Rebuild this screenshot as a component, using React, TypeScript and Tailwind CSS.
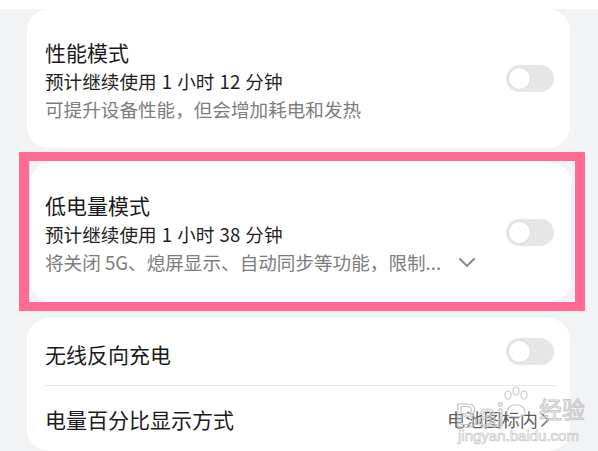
import React from "react";

const font = { fontFamily: '"Noto Sans CJK SC", "Noto Sans", sans-serif' };

function Toggle() {
  return (
    <div className="w-[48px] h-[27px] rounded-full bg-[#e6e6e6] flex items-center p-[2px] shrink-0">
      <div className="w-[23px] h-[23px] rounded-full bg-white border border-[#dadada]" />
    </div>
  );
}

function Chevron({ dir }: { dir: "down" | "right" }) {
  if (dir === "down")
    return (
      <svg width="18" height="11" viewBox="0 0 18 11" className="shrink-0">
        <path d="M2 2 L9 9 L16 2" fill="none" stroke="#8a8a8a" strokeWidth="2" strokeLinecap="round" strokeLinejoin="round" />
      </svg>
    );
  return (
    <svg width="10" height="16" viewBox="0 0 10 16" className="shrink-0">
      <path d="M2 2 L8 8 L2 14" fill="none" stroke="#8a8a8a" strokeWidth="1.8" strokeLinecap="round" strokeLinejoin="round" />
    </svg>
  );
}

export default function App() {
  return (
    <div className="w-[598px] h-[451px] overflow-hidden bg-[#f2f3f5] relative" style={font}>
      <div className="h-[9px] bg-white" />
      <div className="pl-[27px] pr-[28px] flex flex-col">
        {/* Card 1 */}
        <div className="h-[139px] bg-white rounded-[22px] pl-[18px] pr-[16px] flex items-center justify-between">
          <div className="flex flex-col pt-[3px]">
            <div className="text-[21px] leading-[28px] text-[#1a1a1a]">性能模式</div>
            <div className="text-[18.6px] leading-[29px] text-[#1f1f1f] [word-spacing:1px]">预计继续使用 1 小时 12 分钟</div>
            <div className="text-[18.6px] leading-[27px] text-[#7d7d7d]">可提升设备性能，但会增加耗电和发热</div>
          </div>
          <Toggle />
        </div>

        {/* Highlighted card 2 */}
        <div className="mt-[4px] ml-[-8px] mr-[-15px] border-x-[10px] border-y-[9px] border-[#ff6b93] bg-[#f2f3f5] pl-[1px] pr-[4px] pt-[1px]">
          <div className="h-[140px] bg-white rounded-[22px] pl-[15px] pr-[17px] flex items-center justify-between">
            <div className="flex flex-col pt-[2px]">
              <div className="text-[21px] leading-[28px] text-[#1a1a1a]">低电量模式</div>
              <div className="text-[18.6px] leading-[29px] text-[#1f1f1f] [word-spacing:1px]">预计继续使用 1 小时 38 分钟</div>
              <div className="flex items-center text-[18.6px] leading-[28px] text-[#7d7d7d]">
                <span>将关闭 5G、熄屏显示、自动同步等功能，限制...</span>
                <span className="ml-[17px] mt-[2px]"><Chevron dir="down" /></span>
              </div>
            </div>
            <Toggle />
          </div>
        </div>

        {/* Card 3 */}
        <div className="mt-[7px] bg-white rounded-[22px] flex flex-col">
          <div className="h-[67px] pl-[18px] pr-[16px] flex items-center justify-between">
            <div className="text-[21px] text-[#1a1a1a] pt-[6px]">无线反向充电</div>
            <Toggle />
          </div>
          <div className="ml-[17px] mr-[15px] h-px bg-[#e6e6e6]" />
          <div className="h-[65px] pl-[18px] pr-[20px] flex items-center justify-between">
            <div className="text-[21px] text-[#1a1a1a] pt-[3px]">电量百分比显示方式</div>
            <div className="flex items-center gap-[2px] pt-[3px]">
              <span className="text-[18.2px] text-[#5c5c5c]">电池图标内</span>
              <Chevron dir="right" />
            </div>
          </div>
        </div>
      </div>

      {/* Watermark overlay */}
      <div className="absolute left-[455px] top-[384px] w-[130px] h-[62px] pointer-events-none select-none">
        <svg width="30" height="34" viewBox="0 0 30 34" className="absolute left-[46px] top-[2px]">
          <g fill="none" stroke="#cccccc" strokeWidth="1.2">
            <ellipse cx="7" cy="9" rx="3" ry="4" />
            <ellipse cx="15" cy="5" rx="3" ry="4" />
            <ellipse cx="23" cy="9" rx="3" ry="4" />
            <path d="M6 27 C6 16 24 16 24 27 C24 32 6 32 6 27 Z" />
          </g>
        </svg>
        <div className="absolute left-0 top-[14px] text-[34px] leading-[34px] text-transparent [-webkit-text-stroke:1.2px_#c8c8c8]" style={{ fontFamily: '"Liberation Sans", sans-serif' }}>Bai</div>
        <div className="absolute left-[84px] top-[10px] text-[23px] leading-[28px] text-transparent [-webkit-text-stroke:1px_#c8c8c8]">经验</div>
        <div className="absolute left-[3px] top-[44px] text-[15px] leading-[15px] text-transparent [-webkit-text-stroke:0.7px_#c8c8c8]" style={{ fontFamily: '"Liberation Sans", sans-serif' }}>
          jingyan.baidu.com
        </div>
      </div>
    </div>
  );
}
